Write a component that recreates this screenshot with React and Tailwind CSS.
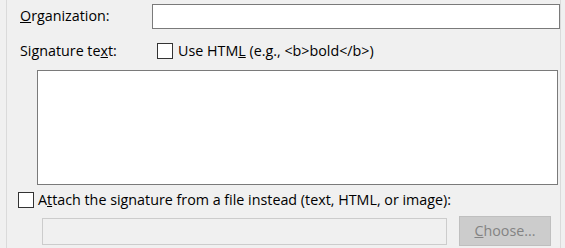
export default function App() {
  return (
    <div className="w-[565px] h-[248px] bg-[#f0f0f0] overflow-hidden text-[14.3px] text-black" style={{ fontFamily: '"Open Sans", "Noto Sans", sans-serif' }}>
      <div className="ml-[6px] w-[555px] h-full border-l border-r border-[#dadada] pl-[13px]">
        <div className="flex items-center pt-[4px] h-[29px]">
          <span className="w-[132px] leading-none"><u>O</u>rganization:</span>
          <div className="w-[408px] h-[25px] bg-white border border-[#7a7a7a]" />
        </div>
        <div className="flex items-center mt-[14px] h-[16px]">
          <span className="w-[137px] leading-none">Signature te<u>x</u>t:</span>
          <label className="flex items-center gap-[5px] leading-none">
            <span className="w-[16px] h-[16px] bg-white border border-[#333333]" />
            <span>Use HTM<u>L</u> (e.g., &lt;b&gt;bold&lt;/b&gt;)</span>
          </label>
        </div>
        <div className="ml-[17px] mt-[11px] w-[521px] h-[115px] bg-white border border-[#7a7a7a]" />
        <label className="flex items-center gap-[4px] -ml-[2px] mt-[7px] h-[16px] leading-none">
          <span className="w-[16px] h-[16px] bg-white border border-[#333333]" />
          <span>A<u>t</u>tach the signature from a file instead (text, HTML, or image):</span>
        </label>
        <div className="flex items-center ml-[22px] mt-[8px]">
          <div className="w-[405px] h-[27px] border border-[#cccccc] bg-[#f0f0f0]" />
          <button className="ml-[12px] w-[92px] h-[30px] bg-[#cccccc] border border-[#bfbfbf] text-[#838383] leading-none">
            <u>C</u>hoose...
          </button>
        </div>
      </div>
    </div>
  );
}
